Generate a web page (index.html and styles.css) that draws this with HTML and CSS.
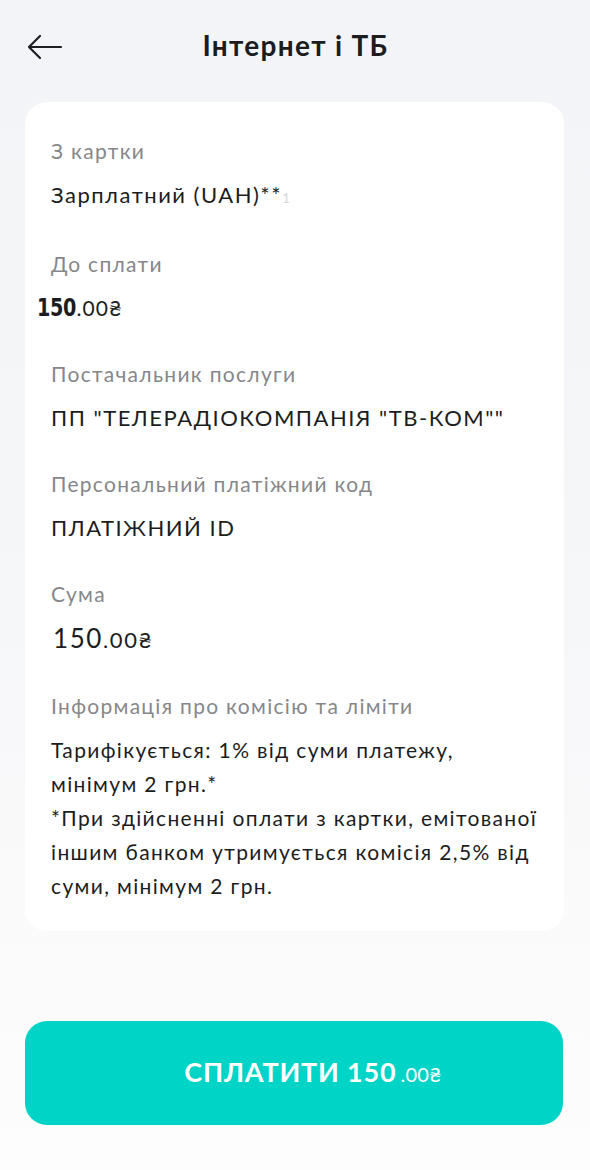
FILE: index.html
```html
<!DOCTYPE html>
<html lang="uk">
<head>
<meta charset="utf-8">
<title>Інтернет і ТБ</title>
<link rel="stylesheet" href="styles.css">
</head>
<body>
<div class="page">
  <header class="topbar">
    <button class="back" aria-label="Назад">
      <svg width="36" height="26" viewBox="0 0 36 26" fill="none" stroke="#1e1f24" stroke-width="2.2" stroke-linecap="round" stroke-linejoin="round">
        <path d="M34 13H2M13 2L2 13l11 11"/>
      </svg>
    </button>
    <h1 class="title">Інтернет і ТБ</h1>
  </header>

  <main class="card">
    <div class="field">
      <div class="label">З картки</div>
      <div class="value">Зарплатний (UAH)**<span class="fade">1</span></div>
    </div>
    <div class="field">
      <div class="label">До сплати</div>
      <div class="value amount-alt"><span class="cond">150</span>.00₴</div>
    </div>
    <div class="field">
      <div class="label">Постачальник послуги</div>
      <div class="value">ПП "ТЕЛЕРАДІОКОМПАНІЯ "ТВ-КОМ""</div>
    </div>
    <div class="field">
      <div class="label">Персональний платіжний код</div>
      <div class="value">ПЛАТІЖНИЙ ID</div>
    </div>
    <div class="field">
      <div class="label">Сума</div>
      <div class="value amount"><span class="big">150</span>.00₴</div>
    </div>
    <div class="field">
      <div class="label">Інформація про комісію та ліміти</div>
      <div class="info">Тарифікується: 1% від суми платежу,<br>мінімум 2 грн.*<br>*При здійсненні оплати з картки, емітованої<br>іншим банком утримується комісія 2,5% від<br>суми, мінімум 2 грн.</div>
    </div>
  </main>

  <div class="footer">
    <button class="pay"><span class="pay-main">СПЛАТИТИ 150</span><span class="pay-cents">.00₴</span></button>
  </div>
</div>
</body>
</html>
```

FILE: styles.css
```css
* { box-sizing: border-box; }
html, body {
  margin: 0;
  padding: 0;
}
body {
  width: 590px;
  height: 1170px;
  font-family: Lato, "Noto Sans", sans-serif;
  color: #1c1d21;
  background: linear-gradient(180deg, #f3f4f7 0px, #f5f6f8 500px, #fafafb 900px, #fdfdfd 1170px);
  overflow: hidden;
}
.page {
  display: flex;
  flex-direction: column;
  height: 1170px;
  padding: 0 26px 0 25px;
}
.topbar {
  position: relative;
  height: 96px;
  display: flex;
  align-items: center;
  justify-content: center;
  padding-bottom: 6px;
}
.back {
  position: absolute;
  left: 2px;
  top: 34px;
  border: 0;
  background: none;
  padding: 0;
  width: 36px;
  height: 26px;
  display: flex;
}
.title {
  margin: 0;
  font-size: 28px;
  font-weight: 700;
  letter-spacing: 1.3px;
  color: #1b1c20;
  padding-left: 2px;
}
.card {
  margin-top: 6px;
  background: #fff;
  border-radius: 22px;
  padding: 37px 14px 28px 26px;
  display: flex;
  flex-direction: column;
  gap: 42px;
}
.field {
  display: flex;
  flex-direction: column;
  gap: 20px;
}
.label {
  font-size: 21px;
  line-height: 24px;
  color: #86878b;
  letter-spacing: 1.3px;
}
.value {
  font-size: 22px;
  line-height: 24px;
  color: #1c1d21;
  letter-spacing: 1.5px;
}
.fade { color: #d8d8d8; font-size: 14px; }
.amount-alt {
  margin-left: -14px;
  font-size: 21px;
  letter-spacing: 1px;
}
.cond {
  display: inline-block;
  font-family: "DejaVu Sans", sans-serif;
  font-weight: 700;
  font-size: 24px;
  letter-spacing: -0.5px;
  transform: scaleX(0.8);
  transform-origin: left center;
  margin-right: -9px;
}
.amount { padding-left: 2px; letter-spacing: 1.6px; }
.big { font-size: 26px; }
.info {
  font-size: 21px;
  line-height: 34px;
  color: #1c1d21;
  letter-spacing: 1.35px;
  margin-top: -5px;
}
.footer {
  margin-top: auto;
  padding-bottom: 45px;
}
.pay {
  width: 538px;
  height: 104px;
  border: 0;
  border-radius: 22px;
  background: #00d4c7;
  color: #fff;
  display: flex;
  align-items: baseline;
  justify-content: center;
  padding-top: 34px;
  padding-left: 44px;
  font-family: Lato, "Noto Sans", sans-serif;
}
.pay-main {
  font-size: 27px;
  font-weight: 700;
  letter-spacing: 0.8px;
}
.pay-cents {
  font-size: 20px;
  font-weight: 400;
  margin-left: 4px;
  letter-spacing: 0.3px;
}
```
